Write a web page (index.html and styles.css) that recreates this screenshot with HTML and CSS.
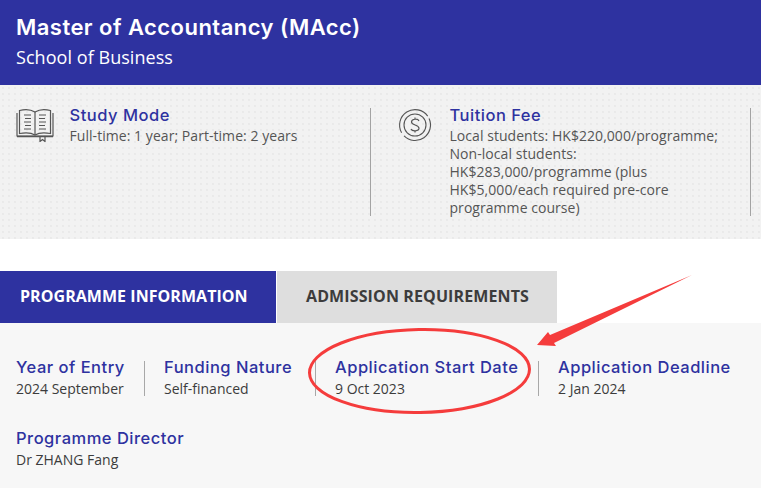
FILE: index.html
```html
<!DOCTYPE html>
<html lang="en">
<head>
<meta charset="utf-8">
<title>Master of Accountancy (MAcc)</title>
<link rel="stylesheet" href="styles.css">
</head>
<body>
<header class="hero">
  <h1 class="hero-title">Master of Accountancy (MAcc)</h1>
  <p class="hero-sub">School of Business</p>
</header>
<section class="summary">
  <div class="summary-item">
    <svg class="summary-icon" viewBox="0 0 38 34" fill="none" stroke="#555" stroke-width="1.2">
      <path d="M1 5V28H37V5"/>
      <path d="M1 28.5H37" stroke-width="1.6"/>
      <path d="M3.5 25.5V2.5C9 1 15 1.5 19 4C23 1.5 29 1 34.5 2.5V25.5C29 24.5 23 24.500 19 27C15 24.500 9 24.500 3.500 25.500Z"/>
      <path d="M19 4V27"/>
      <path d="M8 7H15M9 10.500H15M8 14H15M9 17.500H15M8 21H15M23 7H30M23 10.500H29M23 14H30M23 17.500H29M23 21H30"/>
      <path d="M24 29V33.500L26.500 31.500L29 33.500V29"/>
    </svg>
    <div class="summary-text">
      <h2 class="label">Study Mode</h2>
      <p class="summary-value">Full-time: 1 year; Part-time: 2 years</p>
    </div>
  </div>
  <div class="summary-item">
    <svg class="summary-icon" viewBox="0 0 38 34" fill="none" stroke="#555" stroke-width="1.100">
      <path d="M33.050 10.450A15.500 15.500 0 0 1 8.040 27.960"/>
      <path d="M5.600 24.750A15.500 15.500 0 0 1 31.700 8.100"/>
      <circle cx="19" cy="17" r="11"/>
      <path d="M23 13C22 10.500 15.500 10.500 15.500 14C15.500 17.500 23 16.500 23 20.300C23 23.500 16 23.500 15 21M19 9.500V11.500M19 22.800V24.500" stroke-width="1.200"/>
    </svg>
    <div class="summary-text">
      <h2 class="label">Tuition Fee</h2>
      <p class="summary-value">Local students: HK$220,000/programme; Non-local students: HK$283,000/programme (plus HK$5,000/each required pre-core programme course)</p>
    </div>
  </div>
</section>
<nav class="tabs">
  <div class="tab tab-active">PROGRAMME INFORMATION</div>
  <div class="tab">ADMISSION REQUIREMENTS</div>
</nav>
<section class="facts">
  <div class="fact-row">
    <div class="fact"><h3 class="label">Year of Entry</h3><p class="fact-value">2024 September</p></div>
    <div class="fact"><h3 class="label">Funding Nature</h3><p class="fact-value">Self-financed</p></div>
    <div class="fact"><h3 class="label">Application Start Date</h3><p class="fact-value">9 Oct 2023</p></div>
    <div class="fact fact-last"><h3 class="label">Application Deadline</h3><p class="fact-value">2 Jan 2024</p></div>
  </div>
  <div class="fact-row">
    <div class="fact fact-last"><h3 class="label">Programme Director</h3><p class="fact-value">Dr ZHANG Fang</p></div>
  </div>
</section>
<svg class="annotation" viewBox="0 0 761 488" width="761" height="488">
  <ellipse cx="419.500" cy="371" rx="110" ry="41.500" fill="none" stroke="#f53c3c" stroke-width="3" transform="rotate(-1 419.500 371)"/>
  <polygon points="692,275 554,343 556,346 537,345 548,332 550,335" fill="#f53c3c"/>
</svg>
</body>
</html>
```
FILE: styles.css
```css
* { box-sizing: border-box; }
html, body { margin: 0; padding: 0; }
body {
  position: relative;
  width: 761px;
  height: 488px;
  overflow: hidden;
  background: #fff;
  font-family: "Open Sans", sans-serif;
  color: #444;
}
h1, h2, h3, p { margin: 0; }

.hero {
  height: 85px;
  padding: 13px 16px 0;
  background: #2e32a0;
  color: #fff;
}
.hero-title {
  font-family: Inter, sans-serif;
  font-size: 22px;
  font-weight: 600;
  line-height: 29px;
  letter-spacing: 0.46px;
}
.hero-sub {
  margin-top: 3px;
  font-size: 18px;
  line-height: 24px;
  letter-spacing: 0.05px;
}

.summary {
  display: grid;
  grid-template-columns: 380px 380px;
  height: 154px;
  padding-top: 23px;
  background-color: #f2f2f2;
  background-image: radial-gradient(#e9e9e9 0.7px, transparent 0.9px);
  background-size: 6px 6px;
}
.summary-item {
  display: flex;
  align-self: start;
  height: 108px;
  padding-left: 16px;
  margin-right: 9px;
  border-right: 1px solid #a3a3a3;
}
.summary-icon {
  flex: none;
  width: 38px;
  height: 34px;
  margin-right: 16px;
}
.label {
  font-family: Inter, sans-serif;
  font-size: 16.500px;
  font-weight: 500;
  line-height: 20px;
  letter-spacing: 0.5px;
  color: #2e32a0;
}
.summary-text {
  width: 278px;
  margin-top: -3px;
  margin-left: -0.5px;
}
.summary-value {
  margin-top: 2px;
  font-size: 14px;
  line-height: 18px;
  letter-spacing: 0.05px;
  color: #555;
}

.tabs {
  display: flex;
  margin-top: 32px;
  height: 52px;
}
.tab {
  display: flex;
  align-items: center;
  padding: 0 0 2px 29px;
  width: 280px;
  font-size: 16px;
  font-weight: 700;
  letter-spacing: 0.12px;
  white-space: nowrap;
  color: #3c3c3c;
  background: #dedede;
}
.tab-active {
  width: 276px;
  margin-right: 1px;
  padding-left: 20px;
  letter-spacing: 0.05px;
  color: #fff;
  background: #2e32a0;
}

.facts {
  height: 165px;
  padding: 38px 16px 0;
  background: #f7f7f7;
}
.fact-row {
  display: grid;
  grid-template-columns: 129px 152px 204px 1fr;
  column-gap: 19px;
  margin-bottom: 36px;
}
.fact {
  height: 35px;
  border-right: 1px solid #a8a8a8;
  white-space: nowrap;
}
.fact .label { margin-top: -4px; }
.fact-last { border-right: 0; }
.fact-value {
  font-size: 14px;
  line-height: 20px;
  margin-top: 2px;
  color: #3c3c3c;
}

.annotation {
  position: absolute;
  left: 0;
  top: 0;
  pointer-events: none;
}
```
